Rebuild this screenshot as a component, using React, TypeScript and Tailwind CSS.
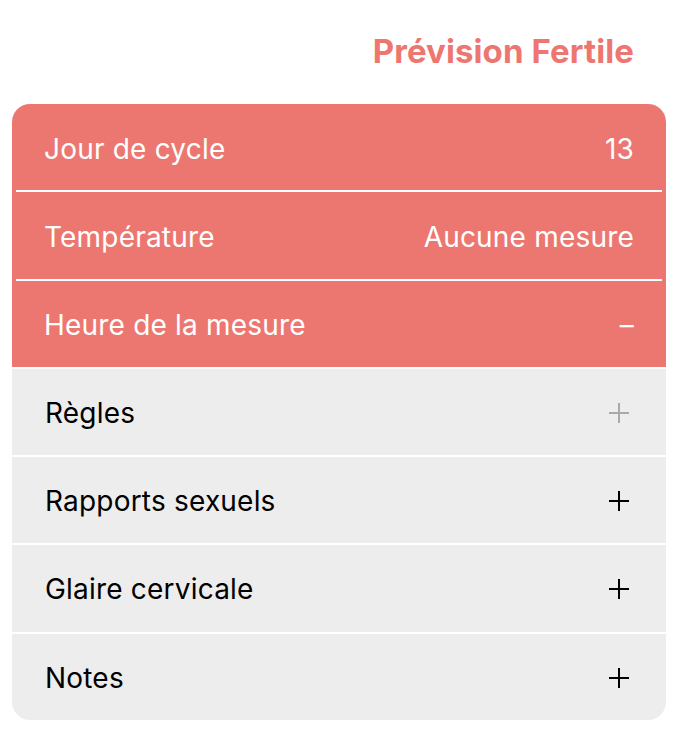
import React from 'react';

const font = { fontFamily: "Inter, 'Noto Sans', sans-serif" };

const Plus: React.FC<{ muted?: boolean }> = ({ muted }) => (
  <svg width="22" height="22" viewBox="0 0 22 22" className={muted ? 'text-[#a9a9a9]' : 'text-black'}>
    <path d="M11 1v20M1 11h20" stroke="currentColor" strokeWidth="2" fill="none" />
  </svg>
);

const redRows = [
  { label: 'Jour de cycle', value: '13' },
  { label: 'Température', value: 'Aucune mesure' },
  { label: 'Heure de la mesure', value: '–' },
];

const grayRows = [
  { label: 'Règles', muted: true },
  { label: 'Rapports sexuels' },
  { label: 'Glaire cervicale' },
  { label: 'Notes' },
];

export default function App() {
  return (
    <div className="w-[684px] h-[747px] bg-white" style={font}>
      <div className="h-[104px] flex items-center justify-end pr-[50px]">
        <h1 className="text-[33px] font-bold text-[#ee7670] tracking-[0.1px]">Prévision Fertile</h1>
      </div>
      <div className="mx-[12px] w-[654px] rounded-[18px] overflow-hidden flex flex-col gap-[2px]">
        <div className="bg-[#ec7771] flex flex-col">
          {redRows.map((r, i) => (
            <React.Fragment key={r.label}>
              {i > 0 && <div className="mx-[4px] h-[2px] bg-white" />}
              <div className="h-[86.25px] flex items-center justify-between px-[32px] pt-[3px] text-white text-[28px] tracking-[0.2px]">
                <span>{r.label}</span>
                <span>{r.value}</span>
              </div>
            </React.Fragment>
          ))}
        </div>
        {grayRows.map(r => (
          <div
            key={r.label}
            className="h-[86.25px] bg-[#ededed] flex items-center justify-between pl-[33px] pr-[36px] pt-[2px] text-black text-[28px] tracking-[0.2px]"
          >
            <span>{r.label}</span>
            <Plus muted={r.muted} />
          </div>
        ))}
      </div>
    </div>
  );
}
